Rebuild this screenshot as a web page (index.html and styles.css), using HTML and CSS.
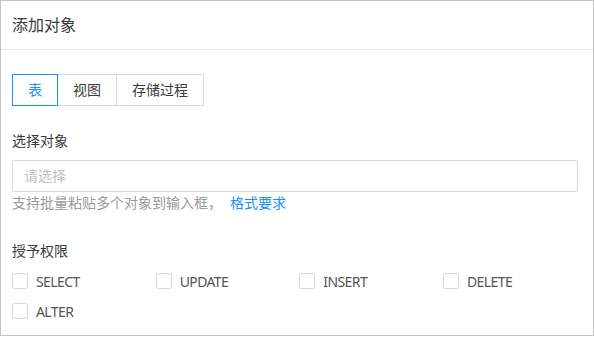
FILE: index.html
```html
<!DOCTYPE html>
<html lang="zh-CN">
<head>
<meta charset="utf-8">
<title>添加对象</title>
<link rel="stylesheet" href="styles.css">
</head>
<body>
<div class="panel">
  <div class="panel-header">添加对象</div>
  <div class="panel-body">
    <div class="tabs">
      <span class="tab active">表</span>
      <span class="tab">视图</span>
      <span class="tab">存储过程</span>
    </div>
    <div class="label first">选择对象</div>
    <div class="input"><span class="placeholder">请选择</span></div>
    <div class="help">支持批量粘贴多个对象到输入框，<a class="link">格式要求</a></div>
    <div class="label second">授予权限</div>
    <div class="checks">
      <label class="check"><span class="box"></span>SELECT</label>
      <label class="check"><span class="box"></span>UPDATE</label>
      <label class="check"><span class="box"></span>INSERT</label>
      <label class="check"><span class="box"></span>DELETE</label>
      <label class="check"><span class="box"></span>ALTER</label>
    </div>
  </div>
</div>
</body>
</html>
```
FILE: styles.css
```css
* { box-sizing: border-box; }
html, body { margin: 0; padding: 0; background: #fff; }
body {
  font-family: "Noto Sans", "Noto Sans CJK SC", sans-serif;
  font-size: 14px;
  color: #333;
}
.panel {
  width: 594px;
  height: 336px;
  border: 1px solid #c4c4c4;
  overflow: hidden;
}
.panel-header {
  height: 49px;
  line-height: 48px;
  padding-left: 11px;
  font-size: 16px;
  color: #3a3a3a;
  border-bottom: 1px solid #e8e8e8;
}
.panel-body {
  padding: 24px 15px 0 11px;
}
.tabs {
  display: flex;
  height: 32px;
}
.tab {
  height: 32px;
  line-height: 30px;
  padding: 0 15px;
  border: 1px solid #d9d9d9;
  color: #3a3a3a;
  background: #fff;
}
.tab + .tab { margin-left: -1px; }
.tab.active {
  border-color: #1890ff;
  color: #1890ff;
  position: relative;
  z-index: 1;
}
.label {
  line-height: 22px;
  color: #3a3a3a;
}
.label.first { margin-top: 24px; }
.label.second { margin-top: 26px; }
.input {
  margin-top: 8px;
  height: 32px;
  line-height: 30px;
  padding: 0 11px;
  border: 1px solid #d9d9d9;
  border-radius: 2px;
}
.placeholder { color: #bfbfbf; }
.help {
  line-height: 22px;
  color: #999;
}
.link {
  color: #1890ff;
  margin-left: 8px;
}
.checks {
  margin-top: 4px;
  display: grid;
  grid-template-columns: repeat(4, 143.67px);
  grid-auto-rows: 30px;
}
.check {
  display: flex;
  align-items: center;
  color: #555;
  letter-spacing: -0.6px;
}
.box {
  width: 16px;
  height: 16px;
  border: 1px solid #d9d9d9;
  border-radius: 2px;
  margin-right: 8px;
  background: #fff;
}
```
